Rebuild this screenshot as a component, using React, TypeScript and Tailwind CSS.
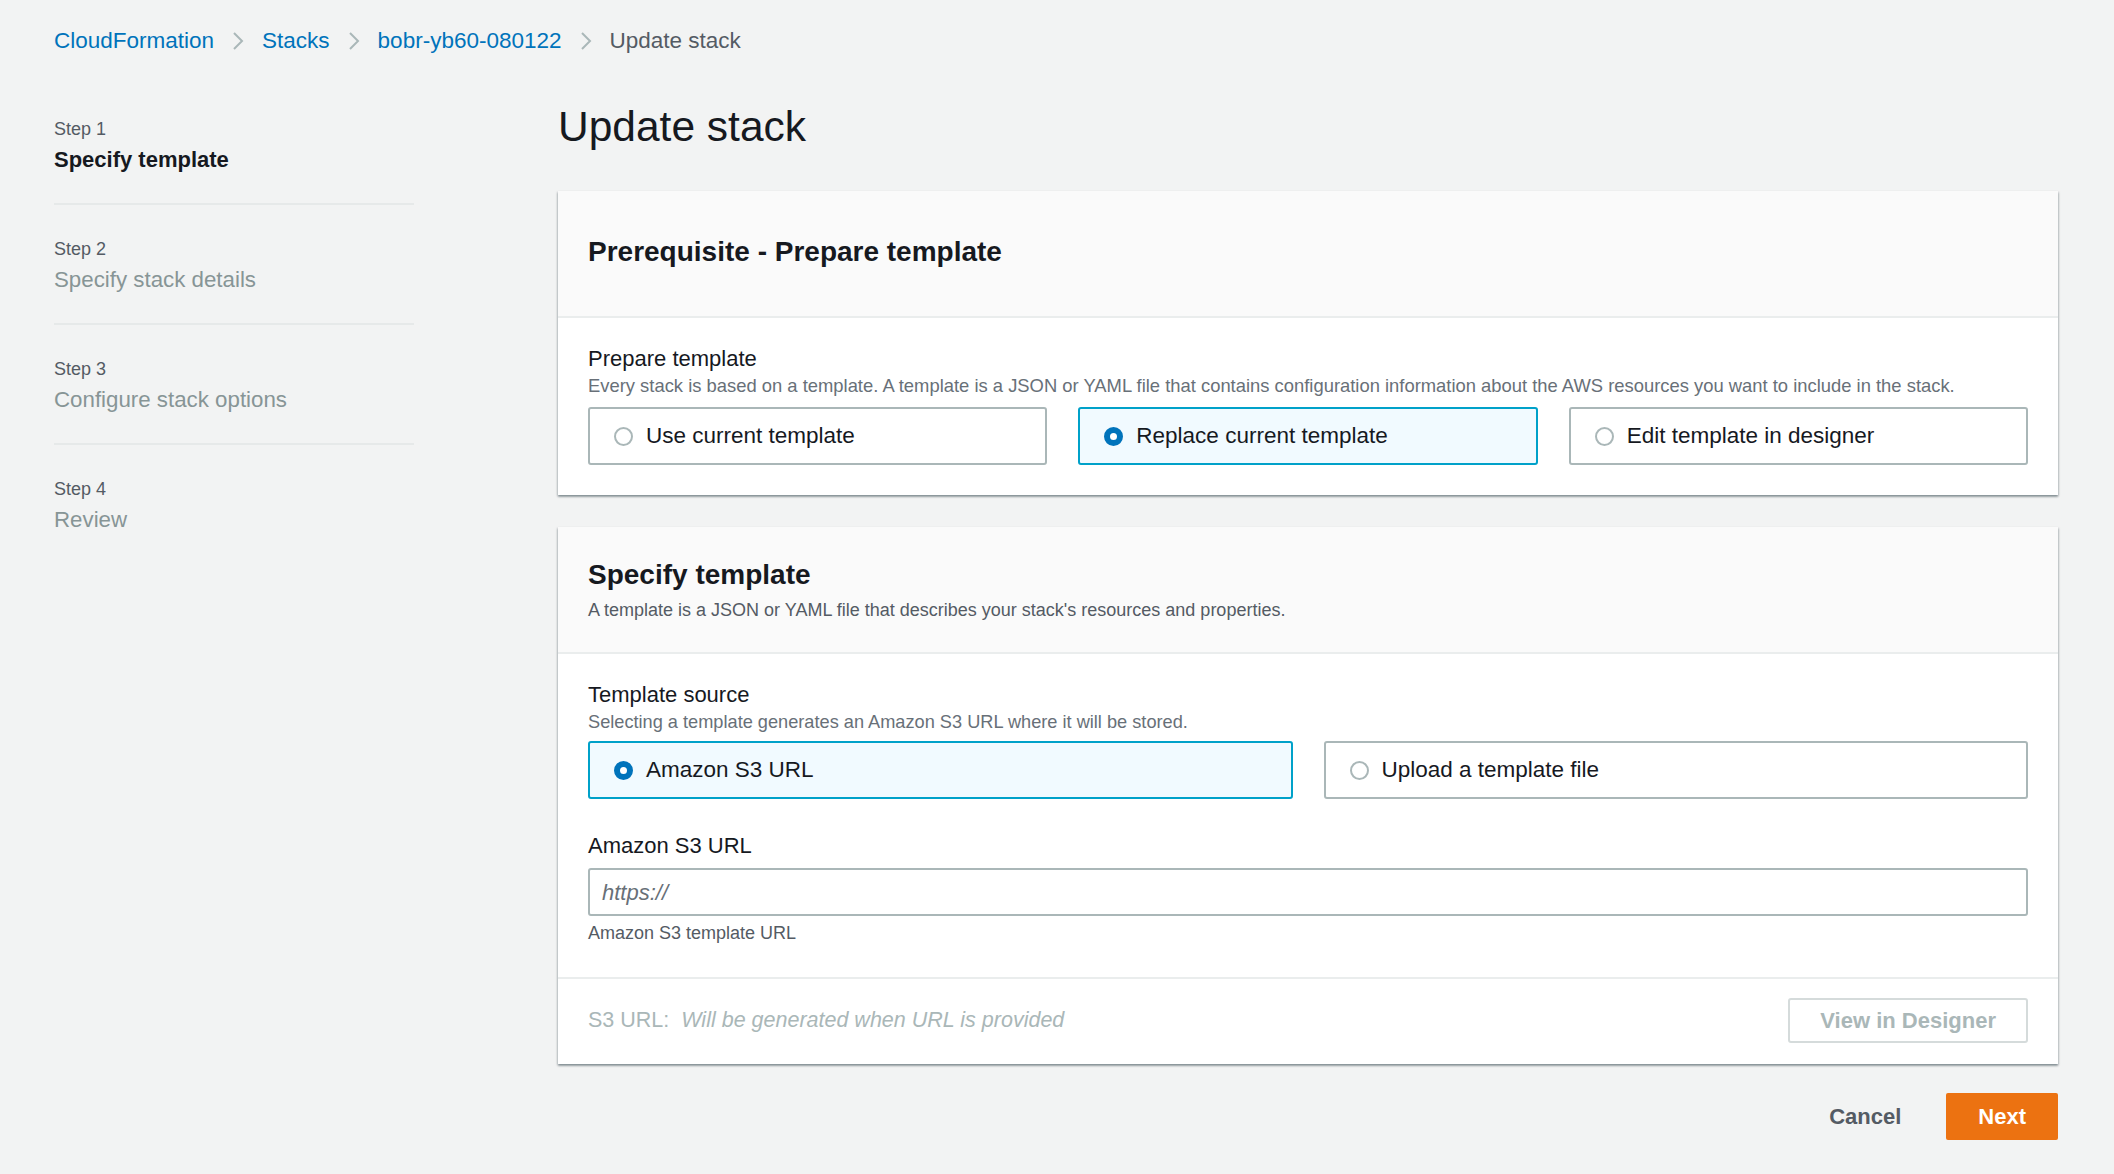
import React from "react";

const STEPS = [
  { step: "Step 1", title: "Specify template", active: true },
  { step: "Step 2", title: "Specify stack details" },
  { step: "Step 3", title: "Configure stack options" },
  { step: "Step 4", title: "Review" },
];

function Chevron() {
  return (
    <svg width="12" height="20" viewBox="0 0 12 20" className="mx-[18px]">
      <path d="M2 2l8 8-8 8" fill="none" stroke="#aab7b8" strokeWidth="2" />
    </svg>
  );
}

function Radio({ checked }: { checked?: boolean }) {
  if (checked) {
    return <span className="inline-block h-[19px] w-[19px] shrink-0 rounded-full border-[6px] border-[#0073bb] bg-white" />;
  }
  return <span className="inline-block h-[19px] w-[19px] shrink-0 rounded-full border-2 border-[#aab7b8] bg-white" />;
}

function Tile({ label, checked }: { label: string; checked?: boolean }) {
  return (
    <div
      className={
        checked
          ? "flex h-[58px] items-center gap-[13px] rounded-[3px] border-2 border-[#00a1c9] bg-[#f1faff] px-[24px]"
          : "flex h-[58px] items-center gap-[13px] rounded-[3px] border-2 border-[#aab7b8] bg-white px-[24px]"
      }
    >
      <Radio checked={checked} />
      <span className="text-[22.5px] leading-[26px] text-[#16191f]">{label}</span>
    </div>
  );
}

const panelShadow =
  "bg-white shadow-[0_2px_2px_0_rgba(0,28,36,0.3),1px_1px_2px_0_rgba(0,28,36,0.15),-1px_1px_2px_0_rgba(0,28,36,0.15)]";

export default function App() {
  return (
    <div className="min-h-screen bg-[#f2f3f3] pl-[54px] pr-[56px] pt-[26px] font-['Liberation_Sans',Arial,sans-serif]">
      {/* breadcrumb */}
      <nav className="flex h-[30px] items-center text-[22.5px]">
        <span className="text-[#0073bb]">CloudFormation</span>
        <Chevron />
        <span className="text-[#0073bb]">Stacks</span>
        <Chevron />
        <span className="text-[#0073bb]">bobr-yb60-080122</span>
        <Chevron />
        <span className="text-[#545b64]">Update stack</span>
      </nav>

      <div className="mt-[44px] flex gap-[144px]">
        {/* steps */}
        <aside className="w-[360px] shrink-0 pt-[17px]">
          {STEPS.map((s, i) => (
            <div
              key={s.step}
              className={
                i === 0
                  ? "border-b-2 border-[#e6e9e9] pb-[29px]"
                  : i === STEPS.length - 1
                  ? "pt-[32px]"
                  : "border-b-2 border-[#e6e9e9] pb-[29px] pt-[32px]"
              }
            >
              <div className="text-[18px] leading-[24px] text-[#545b64]">{s.step}</div>
              <div
                className={
                  s.active
                    ? "mt-[5px] text-[22px] font-bold leading-[28px] text-[#16191f]"
                    : "mt-[5px] text-[22.3px] leading-[28px] text-[#879596]"
                }
              >
                {s.title}
              </div>
            </div>
          ))}
        </aside>

        {/* main */}
        <main className="min-w-0 flex-1">
          <h1 className="mt-[2px] h-[50px] text-[42.5px] leading-[50px] text-[#16191f]">Update stack</h1>

          <section className={"mt-[39px] " + panelShadow}>
            <div className="flex h-[127px] flex-col justify-center border-b-2 border-[#eaeded] bg-[#fafafa] px-[30px] pb-[4px]">
              <h2 className="text-[28px] font-bold leading-[34px] text-[#16191f]">Prerequisite - Prepare template</h2>
            </div>
            <div className="px-[30px] pb-[30px] pt-[28px]">
              <div className="text-[22px] leading-[26px] text-[#16191f]">Prepare template</div>
              <div className="mt-[2px] text-[18.4px] leading-[24px] text-[#687078]">
                Every stack is based on a template. A template is a JSON or YAML file that contains configuration information about the AWS resources you want to include in the stack.
              </div>
              <div className="mt-[9px] grid grid-cols-3 gap-[31px]">
                <Tile label="Use current template" />
                <Tile label="Replace current template" checked />
                <Tile label="Edit template in designer" />
              </div>
            </div>
          </section>

          <section className={"mt-[32px] " + panelShadow}>
            <div className="flex h-[127px] flex-col justify-center border-b-2 border-[#eaeded] bg-[#fafafa] px-[30px] pt-[1px]">
              <h2 className="text-[28px] font-bold leading-[32px] text-[#16191f]">Specify template</h2>
              <p className="mt-[7px] text-[18px] leading-[24px] text-[#545b64]">
                A template is a JSON or YAML file that describes your stack's resources and properties.
              </p>
            </div>
            <div className="px-[30px] pb-[32px] pt-[28px]">
              <div className="text-[22px] leading-[26px] text-[#16191f]">Template source</div>
              <div className="mt-[2px] text-[18.2px] leading-[24px] text-[#687078]">
                Selecting a template generates an Amazon S3 URL where it will be stored.
              </div>
              <div className="mt-[7px] grid grid-cols-2 gap-[31px]">
                <Tile label="Amazon S3 URL" checked />
                <Tile label="Upload a template file" />
              </div>

              <div className="mt-[34px] text-[22px] leading-[26px] text-[#16191f]">Amazon S3 URL</div>
              <div className="mt-[9px] flex h-[48px] items-center rounded-[3px] border-2 border-[#aab7b8] bg-white px-[12px]">
                <span className="text-[22px] italic text-[#687078]">https://</span>
              </div>
              <div className="mt-[5px] text-[18px] leading-[24px] text-[#545b64]">Amazon S3 template URL</div>
            </div>
            <div className="flex items-center justify-between border-t-2 border-[#eaeded] px-[30px] pb-[21px] pt-[19px]">
              <div className="flex items-center text-[21.5px] text-[#aab7b8]">
                <span>S3 URL:</span>
                <span className="ml-[12px] italic">Will be generated when URL is provided</span>
              </div>
              <button className="h-[45px] rounded-[3px] border-2 border-[#d5dbdb] bg-white px-[30px] text-[22px] font-bold text-[#aab7b8]">
                View in Designer
              </button>
            </div>
          </section>

          <div className="mt-[29px] flex items-center justify-end gap-[13px]">
            <button className="h-[47px] px-[32px] text-[22px] font-bold text-[#545b64]">Cancel</button>
            <button className="h-[47px] rounded-[2px] bg-[#ec7211] px-[32px] text-[22px] font-bold text-white">Next</button>
          </div>
        </main>
      </div>
    </div>
  );
}
